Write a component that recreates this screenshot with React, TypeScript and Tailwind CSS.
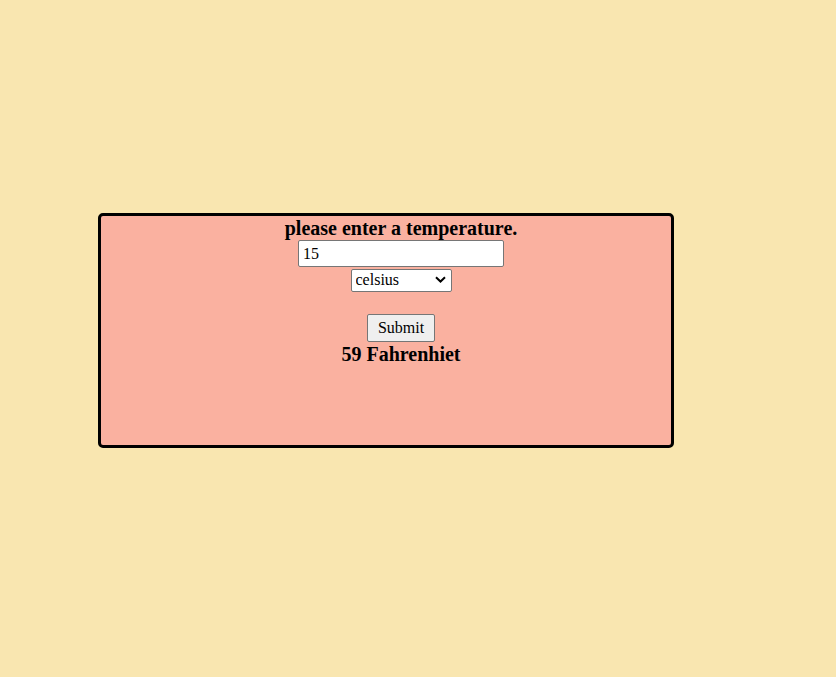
import { useState } from 'react';

export default function App() {
  const [temp, setTemp] = useState('15');
  const [unit, setUnit] = useState('celsius');

  return (
    <main className="min-h-[677px] bg-[#f9e6b0] font-['Liberation_Serif',serif] text-black">
      <div className="pl-[98px] pt-[213px]">
        <div className="flex h-[235px] w-[576px] flex-col items-center rounded-[5px] border-[3px] border-black bg-[#fab1a0] pl-[30px]">
          <h3 className="mt-[2px] text-[20px] font-bold leading-[21px]">please enter a temperature.</h3>
          <input
            value={temp}
            onChange={(e) => setTemp(e.target.value)}
            className="mt-[1px] h-[27px] w-[206px] rounded-[2px] border border-[#767676] bg-white px-[4px] font-['Liberation_Serif',serif] text-[16px] leading-[20px] outline-none"
          />
          <div className="relative mt-[1px] h-[23px] w-[101px]">
            <select
              value={unit}
              onChange={(e) => setUnit(e.target.value)}
              className="h-full w-full appearance-none rounded-[2px] border border-[#767676] bg-white pl-[4px] font-['Liberation_Serif',serif] text-[16px] leading-[20px] outline-none"
            >
              <option value="celsius">celsius</option>
              <option value="fahrenheit">fahrenheit</option>
            </select>
            <svg
              className="pointer-events-none absolute right-[6px] top-[8px]"
              width="11"
              height="7"
              viewBox="0 0 11 7"
              fill="none"
            >
              <path d="M1 1.2 L5.5 5.5 L10 1.2" stroke="#000" strokeWidth="2" />
            </svg>
          </div>
          <button className="mt-[23px] h-[28px] w-[68px] rounded-[2px] border border-[#767676] bg-[#efefef] font-['Liberation_Serif',serif] text-[16px]">
            Submit
          </button>
          <p className="mt-[1px] text-[20px] font-bold leading-[23px]">59 Fahrenhiet</p>
        </div>
      </div>
    </main>
  );
}
